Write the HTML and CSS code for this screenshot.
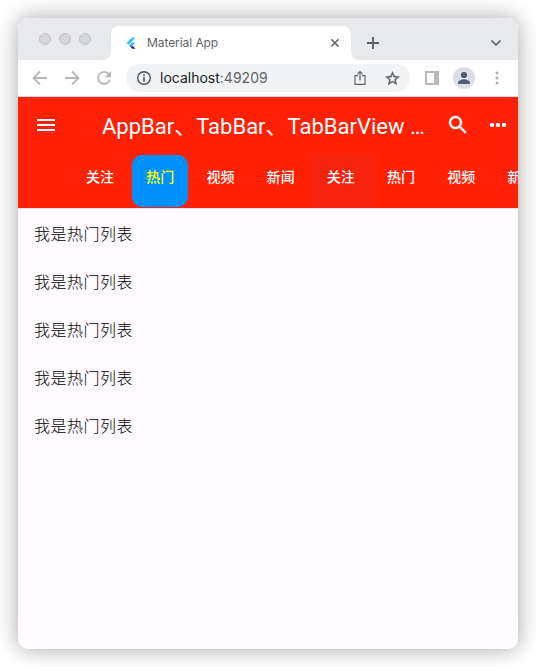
FILE: index.html
```html
<!DOCTYPE html>
<html lang="zh-CN">
<head>
<meta charset="utf-8">
<title>Material App</title>
<link rel="stylesheet" href="styles.css">
</head>
<body>
<div class="window">
  <div class="tabstrip">
    <div class="lights"><i></i><i></i><i></i></div>
    <div class="browser-tab">
      <svg class="flutter" width="10" height="13" viewBox="0 0 10 13"><path fill="#2fc0fa" d="M5.700.7H9.500L2.500 7.700.600 5.800z"/><path fill="#2fc0fa" d="M5.900 5.600H9.500L6.300 8.800 4.300 7.200z"/><path fill="#2b9fe0" d="M3 8.700l1.800-1.800 1.900 1.900-1.800 1.800z"/><path fill="#0d2b86" d="M4.900 10.500l1.800-1.700 2.800 3H6.200z"/></svg>
      <span class="tab-name">Material App</span>
      <svg class="close" width="10" height="10" viewBox="0 0 10 10"><path d="M1.300 1.300l7.200 7.200M8.500 1.300L1.300 8.500"/></svg>
    </div>
    <div class="strip-end">
      <svg class="plus" width="14" height="14" viewBox="0 0 14 14"><path d="M7 1v12M1 7h12"/></svg>
      <svg class="chevron" width="12" height="8" viewBox="0 0 12 8"><path d="M1.500 1.500L6 6l4.500-4.500"/></svg>
    </div>
  </div>
  <div class="toolbar">
    <svg class="nav" width="16" height="16" viewBox="0 0 16 16"><path d="M15 8H2M8 1.500L1.500 8 8 14.500"/></svg>
    <svg class="nav" width="16" height="16" viewBox="0 0 16 16"><path d="M1 8h13M8 1.500L14.500 8 8 14.500"/></svg>
    <svg class="nav" width="16" height="16" viewBox="0 0 16 16"><path d="M12.800 4.200A6 6 0 1 0 13.800 9.700"/><path class="tip" d="M15 1v6.300H8.700z"/></svg>
    <div class="address">
      <svg width="16" height="16" viewBox="0 0 16 16"><circle cx="8" cy="8" r="6.300" fill="none" stroke="#4d5156" stroke-width="1.400"/><path fill="#4d5156" d="M7.200 4.300h1.600v1.600H7.200zM7.200 7.200h1.600v4.500H7.200z"/></svg>
      <span class="url">localhost<span class="port">:49209</span></span>
      <svg class="share" width="14" height="16" viewBox="0 0 14 16"><path d="M4.800 5.700H2v8.600h10V5.700H9.200M7 10.500V1.800M4.300 4.200L7 1.500l2.700 2.700"/></svg>
      <svg class="star" width="17" height="17" viewBox="0 0 24 24"><path fill="#5f6368" stroke="#5f6368" stroke-width=".5" d="M22 9.240l-7.190-.62L12 2 9.190 8.630 2 9.240l5.460 4.730L5.820 21 12 17.270 18.180 21l-1.630-7.030L22 9.240zM12 15.400l-3.760 2.270 1-4.280-3.320-2.880 4.380-.38L12 6.100l1.710 4.040 4.380.38-3.320 2.880 1 4.280L12 15.400z"/></svg>
    </div>
    <svg class="panel" width="14" height="14" viewBox="0 0 14 14"><path fill="#b9b9b9" fill-rule="evenodd" d="M0 0h14v14H0zM2 2v10h7V2z"/></svg>
    <svg class="avatar" width="22" height="22" viewBox="0 0 22 22"><circle cx="11" cy="11" r="11" fill="#dcdfe6"/><circle cx="11" cy="8" r="3.100" fill="#525c73"/><path fill="#525c73" d="M5 17v-1.500c0-2 4-3.300 6-3.300s6 1.300 6 3.300V17z"/></svg>
    <svg class="kebab" width="4" height="14" viewBox="0 0 4 14"><g fill="#b0b0b0"><circle cx="2" cy="2" r="1.500"/><circle cx="2" cy="7" r="1.500"/><circle cx="2" cy="12" r="1.500"/></g></svg>
  </div>
  <header class="appbar">
    <div class="title-row">
      <svg class="menu" width="24" height="24" viewBox="0 0 24 24"><path fill="#fff" d="M3 18h18v-2H3v2zm0-5h18v-2H3v2zm0-7v2h18V6H3z"/></svg>
      <h1>AppBar、TabBar、TabBarView …</h1>
      <svg class="search" width="24" height="24" viewBox="0 0 24 24"><path fill="#fff" d="M15.500 14h-.79l-.28-.27C15.410 12.590 16 11.110 16 9.500 16 5.910 13.090 3 9.500 3S3 5.910 3 9.500 5.910 16 9.500 16c1.610 0 3.090-.59 4.230-1.570l.27.28v.79l5 4.990L20.490 19l-4.990-5zm-6 0C7.010 14 5 11.990 5 9.500S7.010 5 9.500 5 14 7.010 14 9.500 11.990 14 9.500 14z" stroke="#fff" stroke-width=".4"/></svg>
      <svg class="more" width="24" height="24" viewBox="0 0 24 24"><g fill="#fff"><rect x="4" y="10" width="4" height="4" rx="1.300"/><rect x="10" y="10" width="4" height="4" rx="1.300"/><rect x="16" y="10" width="4" height="4" rx="1.300"/></g></svg>
    </div>
    <nav class="tabs">
      <div class="tab">关注</div><div class="tab selected">热门</div><div class="tab">视频</div><div class="tab">新闻</div><div class="tab hover">关注</div><div class="tab">热门</div><div class="tab">视频</div><div class="tab">新闻</div>
    </nav>
  </header>
  <main class="list">
    <div>我是热门列表</div><div>我是热门列表</div><div>我是热门列表</div><div>我是热门列表</div><div>我是热门列表</div>
  </main>
</div>
</body>
</html>
```
FILE: styles.css
```css
* { box-sizing: border-box; }
body { margin: 0; padding: 18px; width: 536px; height: 667px; overflow: hidden; background: #fff; font-family: Roboto, "Noto Sans CJK SC", sans-serif; }
svg { display: block; flex: none; }
.window { width: 500px; height: 631px; border-radius: 10px; overflow: hidden; background: #fffbff; box-shadow: 0 0 22px rgba(0,0,0,.36); }
.tabstrip { height: 42px; display: flex; background: linear-gradient(#e8e9ed 50%, #fff 50%); }
.lights { width: 93px; padding: 15px 0 0 21px; display: flex; gap: 8px; background: #e8e9ed; border-bottom-right-radius: 8px; }
.lights i { width: 12px; height: 12px; border-radius: 50%; background: #d5d6d8; border: 1px solid #c3c3c4; }
.browser-tab { width: 240px; height: 34px; margin-top: 8px; padding: 0 11px 0 15px; display: flex; align-items: center; background: #fff; border-radius: 8px 8px 0 0; }
.tab-name { flex: 1; margin-left: 11px; font: 12px/16px Inter, sans-serif; letter-spacing: -.07px; color: #5f6368; }
.close path { fill: none; stroke: #5f6368; stroke-width: 1.6; }
.strip-end { flex: 1; display: flex; background: #e8e9ed; border-bottom-left-radius: 8px; }
.plus { margin: 18px 0 0 15px; }
.plus path { fill: none; stroke: #5b5e62; stroke-width: 1.8; }
.chevron { margin: 21px 0 0 110px; }
.chevron path { fill: none; stroke: #5f6368; stroke-width: 1.7; }
.toolbar { height: 37px; padding: 0 0 0 14px; display: flex; align-items: center; background: #fff; border-bottom: 1px solid #d6d8db; }
.nav { margin-right: 16px; }
.nav path { fill: none; stroke: #b8b8b8; stroke-width: 1.9; }
.nav .tip { fill: #b8b8b8; stroke: none; }
.address { width: 284px; height: 28px; margin-left: -2px; padding: 0 9px 0 10px; display: flex; align-items: center; border-radius: 14px; background: #f1f3f5; }
.url { flex: 1; margin-left: 8px; font: 14px/20px Inter, sans-serif; letter-spacing: 0; color: #202124; }
.port { color: #5f6368; }
.share { margin-right: 17px; }
.share path { fill: none; stroke: #5f6368; stroke-width: 1.2; }
.panel { margin-left: 15px; }
.avatar { margin-left: 14px; }
.kebab { margin-left: 19.5px; }
.appbar { height: 111px; background: #ff2105; color: #fff; overflow: hidden; }
.title-row { height: 56px; display: flex; align-items: center; padding-left: 16px; }
h1 { width: 326px; margin: 4px 0 0 44px; font-size: 22px; line-height: 28px; font-weight: 400; white-space: nowrap; }
.search { margin-left: 18px; }
.more { margin-left: 16px; }
.tabs { display: flex; padding-left: 52px; height: 55px; }
.tab { flex: none; width: 60.2px; height: 55px; padding-left: 16px; font-size: 14px; line-height: 48px; letter-spacing: .1px; font-weight: 500; white-space: nowrap; }
.selected { width: 56.2px; height: 52px; margin: 2px 2px 0; padding-left: 14px; line-height: 44px; border-radius: 10px; background: #0091ff; color: #ff0; }
.hover { background: #f5230e; }
.list { padding-top: 2px; border-top: 1px solid #e5dfe7; }
.list div { height: 48px; padding-left: 16px; font-size: 16px; line-height: 48px; letter-spacing: .5px; font-weight: 300; color: #000; }
```
